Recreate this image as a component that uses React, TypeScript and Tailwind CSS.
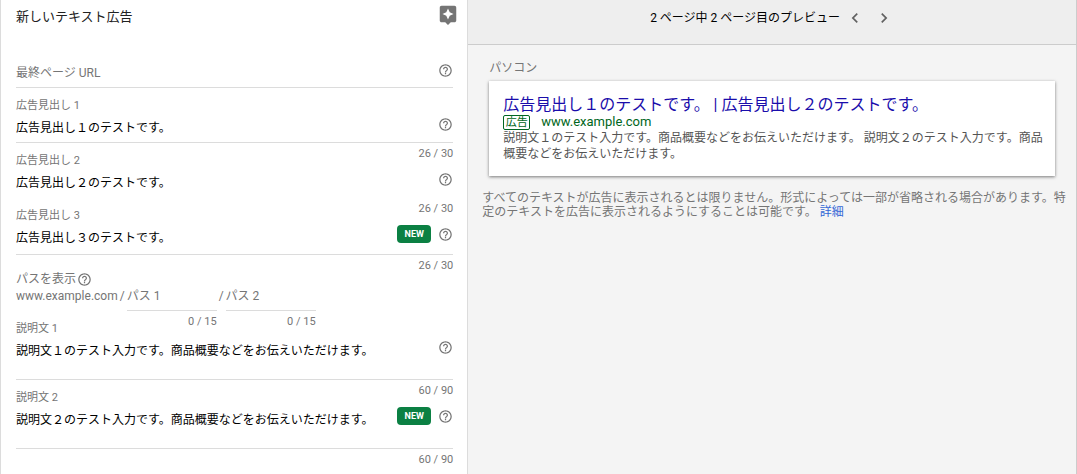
import { useState } from 'react'
import type { ReactNode } from 'react'
import { MdAssistant, MdChevronLeft, MdChevronRight, MdHelpOutline } from 'react-icons/md'
import { clsx } from 'clsx'

type AdField = {
  id: string
  label: string
  value: string
  max: number
  count: number
  isNew?: boolean
  underline?: boolean
  spacing: string
}

const headlines: AdField[] = [
  { id: 'headline-1', label: '広告見出し 1', value: '広告見出し１のテストです。', max: 30, count: 26, spacing: 'pb-[3px]' },
  { id: 'headline-2', label: '広告見出し 2', value: '広告見出し２のテストです。', max: 30, count: 26, underline: false, spacing: 'pb-[3px]' },
  { id: 'headline-3', label: '広告見出し 3', value: '広告見出し３のテストです。', max: 30, count: 26, isNew: true, spacing: 'pb-[5px]' },
]

const descriptions: AdField[] = [
  { id: 'description-1', label: '説明文 1', value: '説明文１のテスト入力です。商品概要などをお伝えいただけます。', max: 90, count: 60, spacing: 'pb-[17px]' },
  { id: 'description-2', label: '説明文 2', value: '説明文２のテスト入力です。商品概要などをお伝えいただけます。', max: 90, count: 60, isNew: true, spacing: 'pb-[17px]' },
]

const paths = [
  { id: 'path-1', label: 'パス 1' },
  { id: 'path-2', label: 'パス 2' },
]

function HelpButton() {
  return (
    <button type="button" aria-label="ヘルプ" className="shrink-0 text-[#757575]">
      <MdHelpOutline className="size-[15px]" />
    </button>
  )
}

// Overlaps the top of the next row, so its label sits beside the counter
function Counter({ children }: { children: ReactNode }) {
  return <p className="mt-0.5 -mb-[9px] h-4 text-right text-[11px] leading-[18px] text-[#757575]">{children}</p>
}

function Field({ field }: { field: AdField }) {
  const [value, setValue] = useState(field.value)

  return (
    <div>
      <label htmlFor={field.id} className="block h-4 w-fit text-[11px] leading-[18px] text-[#757575]">
        {field.label}
      </label>
      <div
        className={clsx(
          'flex items-start border-b',
          field.underline === false ? 'border-transparent' : 'border-[#dcdcdc]',
          field.spacing
        )}
      >
        <input
          id={field.id}
          value={value}
          onChange={(e) => setValue(e.target.value)}
          className="h-[26px] min-w-0 flex-1 text-xs text-black outline-none"
        />
        <div className="mt-0.5 flex h-[18px] items-center gap-[7px]">
          {field.isNew && (
            <span className="h-[18px] w-[34px] rounded bg-[#0b8043] text-center text-[9px] leading-[19px] font-bold text-white">
              NEW
            </span>
          )}
          <HelpButton />
        </div>
      </div>
      <Counter>
        {field.count} / {field.max}
      </Counter>
    </div>
  )
}

function AdForm() {
  return (
    <form className="min-w-0 border-x border-[#dcdcdc] bg-white pr-[14px] pl-[15px]">
      <header className="flex h-[59px] items-start justify-between">
        <h1 className="mt-1.5 text-[13px] leading-[22px] text-[#212121]">新しいテキスト広告</h1>
        <button type="button" aria-label="アシスタント" className="-mr-1.5 pt-1 text-[#757575]">
          <MdAssistant className="size-[22px]" />
        </button>
      </header>

      <div className="mb-[9px] flex items-start border-b border-[#dcdcdc]">
        <input
          aria-label="最終ページ URL"
          placeholder="最終ページ URL"
          className="h-7 min-w-0 flex-1 text-xs outline-none placeholder:text-[#757575]"
        />
        <div className="mt-0.5 flex h-[18px] items-center">
          <HelpButton />
        </div>
      </div>

      {headlines.map((field) => (
        <Field key={field.id} field={field} />
      ))}

      <fieldset className="pt-[7px] text-xs text-[#757575]">
        <div className="flex h-4 items-center gap-px leading-[18px]">
          <span>パスを表示</span>
          <HelpButton />
        </div>
        <div className="flex items-start leading-[18px]">
          <span>www.example.com</span>
          {paths.map((path) => (
            <div key={path.id} className="flex">
              <span className="px-0.5">/</span>
              <div className="w-[90px]">
                <input
                  id={path.id}
                  aria-label={path.label}
                  placeholder={path.label}
                  className="block h-6 w-full border-b border-[#dcdcdc] pb-[5px] outline-none placeholder:text-[#757575]"
                />
                <Counter>0 / 15</Counter>
              </div>
            </div>
          ))}
        </div>
      </fieldset>

      {descriptions.map((field) => (
        <Field key={field.id} field={field} />
      ))}
    </form>
  )
}

function AdPreview() {
  return (
    <section className="min-w-0 border-r border-[#cccccc] bg-[#f4f4f4]">
      <header className="flex h-[45px] items-start justify-center border-b border-[#cccccc] bg-[#eeeeee] pt-2">
        <div className="flex h-5 items-center gap-[9px]">
          <h2 className="-mr-1 text-xs text-black">2 ページ中 2 ページ目のプレビュー</h2>
          <button type="button" aria-label="前へ" className="text-[#616161]">
            <MdChevronLeft className="size-5" />
          </button>
          <button type="button" aria-label="次へ" className="text-[#616161]">
            <MdChevronRight className="size-5" />
          </button>
        </div>
      </header>

      <div className="mx-[21px] pt-[14px]">
        <h3 className="h-4 text-xs leading-[18px] text-[#757575]">パソコン</h3>
        <article className="mt-1.5 bg-white pt-[13px] pr-2 pb-[14px] pl-[14px] shadow-[0_1px_3px_rgba(0,0,0,0.5)]">
          <a href="#" className="block h-5 text-base leading-[22px] text-[#1a0dab]">
            広告見出し１のテストです。 | 広告見出し２のテストです。
          </a>
          <div className="flex h-4 items-center gap-[11px] text-[#006621]">
            <span className="h-[15px] w-[27px] rounded-xs border border-[#006621] text-center text-[11px] leading-[14px]">
              広告
            </span>
            <span className="text-[13px]">www.example.com</span>
          </div>
          <p className="text-xs leading-4 text-[#545454]">
            説明文１のテスト入力です。商品概要などをお伝えいただけます。 説明文２のテスト入力です。商品概要などをお伝えいただけます。
          </p>
        </article>
      </div>

      <p className="mt-[15px] pr-[3px] pl-[14px] text-xs leading-[14px] text-[#757575]">
        すべてのテキストが広告に表示されるとは限りません。形式によっては一部が省略される場合があります。特定のテキストを広告に表示されるようにすることは可能です。{' '}
        <a href="#" className="text-[#3367d6]">
          詳細
        </a>
      </p>
    </section>
  )
}

export default function App() {
  return (
    <main
      lang="ja"
      className="grid min-h-screen grid-cols-[10fr_13fr] font-[Roboto,'Noto_Sans_CJK_JP',sans-serif]"
    >
      <AdForm />
      <AdPreview />
    </main>
  )
}
